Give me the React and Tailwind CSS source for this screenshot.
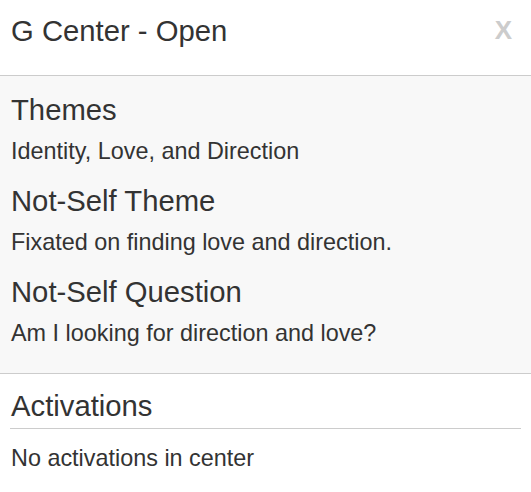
import React from "react";

export default function App() {
  const sections = [
    { title: "Themes", body: "Identity, Love, and Direction" },
    { title: "Not-Self Theme", body: "Fixated on finding love and direction." },
    { title: "Not-Self Question", body: "Am I looking for direction and love?" },
  ];
  return (
    <div
      className="w-[531px] h-[492px] bg-white text-[#333333] overflow-hidden"
      style={{ fontFamily: '"Liberation Sans", Arial, sans-serif' }}
    >
      <div className="h-[76px] flex items-start justify-between pl-[11px] pr-[19px] pt-[14px] border-b border-[#cccccc]">
        <h1 className="text-[29.25px] leading-[34px] font-normal">G Center - Open</h1>
        <button className="text-[26px] leading-[30px] font-bold text-[#cccccc] mt-[1px]">X</button>
      </div>
      <div className="bg-[#f8f8f8] border-b border-[#cccccc] pl-[11px] pr-[11px] pt-[17px] pb-[25px] flex flex-col gap-[18px]">
        {sections.map((s) => (
          <div key={s.title} className="flex flex-col gap-[9px]">
            <h2 className="text-[29.25px] leading-[34px] font-normal">{s.title}</h2>
            <p className="text-[23.4px] leading-[30px]">{s.body}</p>
          </div>
        ))}
      </div>
      <div className="px-[10px] pt-[15px]">
        <h2 className="text-[29.25px] leading-[34px] font-normal pl-[1px] pb-[5px] border-b border-[#cccccc]">
          Activations
        </h2>
        <p className="text-[23.4px] leading-[30px] pl-[1px] mt-[14px]">No activations in center</p>
      </div>
    </div>
  );
}
